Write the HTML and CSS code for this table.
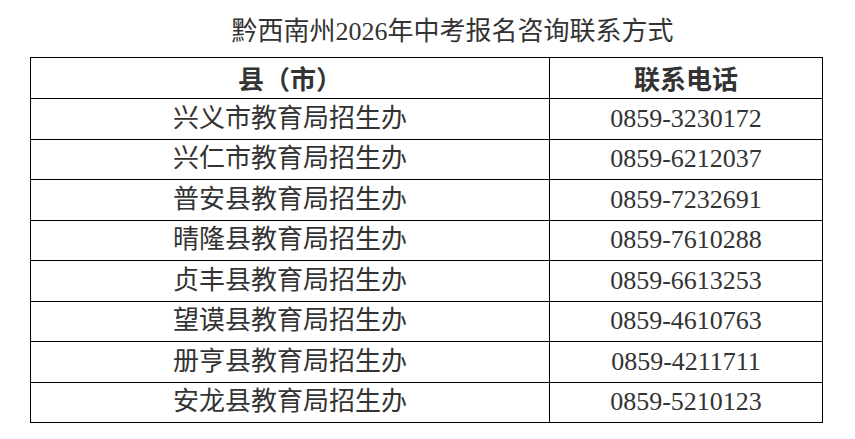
FILE: index.html
```html
<!DOCTYPE html>
<html lang="zh-CN">
<head>
<meta charset="utf-8">
<title>黔西南州2026年中考报名咨询联系方式</title>
<link rel="stylesheet" href="styles.css">
</head>
<body>
<div class="page">
  <h1 class="title">黔西南州2026年中考报名咨询联系方式</h1>
  <table class="contacts">
    <thead>
      <tr><th class="col-county">县（市）</th><th class="col-phone">联系电话</th></tr>
    </thead>
    <tbody>
      <tr><td>兴义市教育局招生办</td><td>0859-3230172</td></tr>
      <tr><td>兴仁市教育局招生办</td><td>0859-6212037</td></tr>
      <tr><td>普安县教育局招生办</td><td>0859-7232691</td></tr>
      <tr><td>晴隆县教育局招生办</td><td>0859-7610288</td></tr>
      <tr><td>贞丰县教育局招生办</td><td>0859-6613253</td></tr>
      <tr><td>望谟县教育局招生办</td><td>0859-4610763</td></tr>
      <tr><td>册亨县教育局招生办</td><td>0859-4211711</td></tr>
      <tr><td>安龙县教育局招生办</td><td>0859-5210123</td></tr>
    </tbody>
  </table>
</div>
</body>
</html>
```
FILE: styles.css
```css
html, body {
  margin: 0;
  padding: 0;
  background: #fff;
}
.page {
  width: 855px;
  font-family: "Liberation Serif", "Noto Sans CJK SC", serif;
  color: #333;
  padding-top: 14px;
}
.title {
  margin: 0 0 7px 0;
  padding-left: 50px;
  text-align: center;
  font-size: 26px;
  font-weight: normal;
  line-height: 36px;
  height: 36px;
}
.contacts {
  margin-left: 30px;
  width: 793px;
  border-collapse: collapse;
  table-layout: fixed;
}
.contacts th,
.contacts td {
  border: 1px solid #000;
  padding: 0;
  text-align: center;
  vertical-align: middle;
  font-size: 26px;
  line-height: 30px;
}
.contacts th {
  font-family: "Noto Sans CJK SC", sans-serif;
  font-weight: bold;
  height: 40px;
}
.contacts td {
  height: 39.5px;
}
.col-county {
  width: 518px;
}
```
